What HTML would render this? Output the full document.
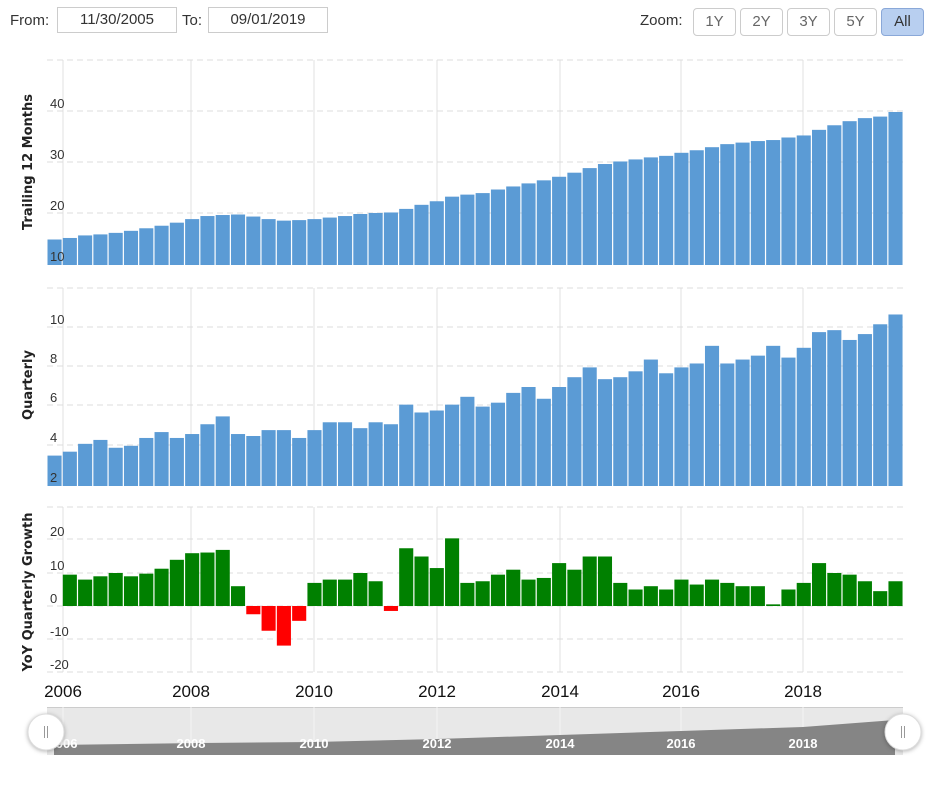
<!DOCTYPE html>
<html><head><meta charset="utf-8"><style>
body{margin:0;background:#fff;width:933px;height:786px;overflow:hidden;font-family:"Liberation Sans",sans-serif}
.inp{position:absolute;top:7px;height:26px;border:1px solid #ccc;box-sizing:border-box;font-size:15px;line-height:24px;text-align:center;color:#333}
.lbl{position:absolute;top:12px;font-size:15px;color:#333}
.btn{position:absolute;top:8px;height:28px;width:43px;border:1px solid #ccc;border-radius:4px;box-sizing:border-box;font-size:15px;line-height:26px;text-align:center;color:#666;background:#fff}
</style></head><body>
<div class="lbl" style="left:10px">From:</div>
<div class="inp" style="left:57px;width:120px">11/30/2005</div>
<div class="lbl" style="left:182px">To:</div>
<div class="inp" style="left:208px;width:120px">09/01/2019</div>
<div class="lbl" style="left:640px">Zoom:</div>
<div class="btn" style="left:693px">1Y</div>
<div class="btn" style="left:740px">2Y</div>
<div class="btn" style="left:787px">3Y</div>
<div class="btn" style="left:834px">5Y</div>
<div class="btn" style="left:881px;background:#b8cff0;border-color:#8aa8d8;color:#333">All</div>
<svg id="s" width="933" height="786" style="position:absolute;left:0;top:0" xmlns="http://www.w3.org/2000/svg" font-family="Liberation Sans, sans-serif"></svg>
<script>
var s=document.getElementById('s'),h='';
var X0=47,W=15.29,years=[[2006,63],[2008,191],[2010,314],[2012,437],[2014,560],[2016,681],[2018,803]];
function grid(top,bot){years.forEach(function(y){h+='<line x1="'+y[1]+'" x2="'+y[1]+'" y1="'+top+'" y2="'+bot+'" stroke="#e0e0e0"/>';});}
function hl(y){h+='<line x1="47" x2="905" y1="'+y+'" y2="'+y+'" stroke="#ddd" stroke-dasharray="6,4"/>';}
function lab(y,t){h+='<text x="50" y="'+(y-3)+'" font-size="13" fill="#333">'+t+'</text>';}
grid(60,265);[60,111,162,213].forEach(hl);
var a=[15,15.3,15.8,16,16.3,16.7,17.2,17.7,18.3,19,19.6,19.8,19.9,19.5,19,18.7,18.8,19,19.3,19.6,20,20.2,20.3,21,21.8,22.5,23.4,23.8,24.1,24.8,25.4,26,26.6,27.3,28.1,29,29.8,30.3,30.7,31.1,31.4,32,32.5,33.1,33.7,34,34.3,34.5,35,35.4,36.5,37.4,38.2,38.8,39.1,40];
a.forEach(function(v,i){var t=265-(v-10)*5.1;h+='<rect x="'+(X0+i*W+0.5)+'" y="'+t+'" width="'+(W-1.2)+'" height="'+(265-t)+'" fill="#5b9bd5"/>';});
lab(111,40);lab(162,30);lab(213,20);lab(264,10);
grid(288,486);[288,327,366,405,445].forEach(hl);
var b=[3.5,3.7,4.1,4.3,3.9,4.0,4.4,4.7,4.4,4.6,5.1,5.5,4.6,4.5,4.8,4.8,4.4,4.8,5.2,5.2,4.9,5.2,5.1,6.1,5.7,5.8,6.1,6.5,6.0,6.2,6.7,7.0,6.4,7.0,7.5,8.0,7.4,7.5,7.8,8.4,7.7,8.0,8.2,9.1,8.2,8.4,8.6,9.1,8.5,9.0,9.8,9.9,9.4,9.7,10.2,10.7];
b.forEach(function(v,i){var t=485-(v-2)*19.6;h+='<rect x="'+(X0+i*W+0.5)+'" y="'+t+'" width="'+(W-1.2)+'" height="'+(486-t)+'" fill="#5b9bd5"/>';});
lab(327,10);lab(366,8);lab(405,6);lab(445,4);lab(485,2);
grid(507,672);[507,539,573,606,639,672].forEach(hl);
var c=[9.5,8,9,10,9,9.8,11.3,14,16,16.2,17,6,-2.5,-7.5,-12,-4.5,7,8,8,10,7.5,-1.5,17.5,15,11.5,20.5,7,7.5,9.5,11,8,8.5,13,11,15,15,7,5,6,5,8,6.5,8,7,6,6,0.5,5,7,13,10,9.5,7.5,4.5,7.5];
c.forEach(function(v,i){var z=606,t=z-v*3.3,y=Math.min(t,z),hh=Math.abs(v*3.3);h+='<rect x="'+(X0+(i+1)*W+0.5)+'" y="'+y+'" width="'+(W-1.2)+'" height="'+hh+'" fill="'+(v<0?'#ff0000':'#008000')+'"/>';});
lab(539,20);lab(573,10);lab(606,0);lab(639,-10);lab(672,-20);
function tt(cy,t){h+='<text transform="translate(32,'+cy+') rotate(-90)" text-anchor="middle" font-size="13" font-weight="bold" fill="#222" font-family="DejaVu Sans, sans-serif">'+t+'</text>';}
tt(162,'Trailing 12 Months');tt(385,'Quarterly');tt(592,'YoY Quarterly Growth');
years.forEach(function(y){h+='<text x="'+y[1]+'" y="697" text-anchor="middle" font-size="17" fill="#111">'+y[0]+'</text>';});
h+='<rect x="47" y="707" width="856" height="48" fill="#e8e8e8"/><line x1="47" x2="903" y1="707.5" y2="707.5" stroke="#ccc"/>';
years.forEach(function(y){h+='<line x1="'+y[1]+'" x2="'+y[1]+'" y1="707" y2="755" stroke="#f4f4f4"/>';});
h+='<polygon points="54,755 54,745 200,743 314,742 437,739 560,735 681,731 803,727 895,720 895,755" fill="#858585"/>';
years.forEach(function(y){h+='<text x="'+y[1]+'" y="748" text-anchor="middle" font-size="13" font-weight="bold" fill="#fff">'+y[0]+'</text>';});
function hd(x){h+='<circle cx="'+x+'" cy="732" r="18" fill="#fff" stroke="#ddd" style="filter:drop-shadow(0 1px 2px rgba(0,0,0,.3))"/><line x1="'+(x-1.5)+'" x2="'+(x-1.5)+'" y1="726" y2="738" stroke="#999"/><line x1="'+(x+1.5)+'" x2="'+(x+1.5)+'" y1="726" y2="738" stroke="#999"/>';}
hd(46);hd(903);
s.innerHTML=h;
</script>
</body></html>
